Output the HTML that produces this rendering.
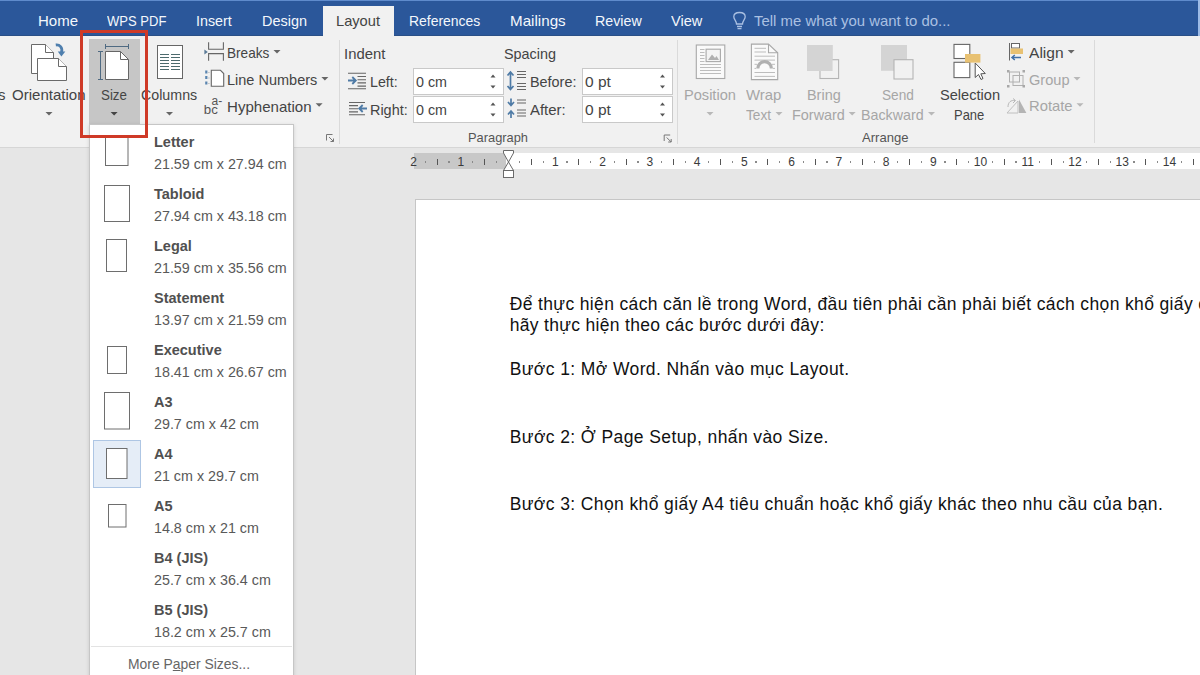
<!DOCTYPE html>
<html><head><meta charset="utf-8">
<style>
html,body{margin:0;padding:0;}
body{width:1200px;height:675px;overflow:hidden;position:relative;background:#e6e6e6;font-family:"Liberation Sans",sans-serif;}
.a{position:absolute;box-sizing:border-box;}
.t{position:absolute;white-space:pre;transform-origin:0 0;font-family:"Liberation Sans",sans-serif;}
svg{position:absolute;overflow:visible;}
</style></head><body>
<!-- tab bar -->
<div class="a" style="left:0;top:0;width:1200px;height:36px;background:#2b579a;"></div>
<div class="a" style="left:0;top:0;width:1200px;height:1px;background:#5f8bcc;"></div>
<div class="a" style="left:323px;top:6px;width:71px;height:31px;background:#f1f1f1;"></div>
<div class="a" style="left:1198px;top:0;width:2px;height:36px;background:#9dbbe6;"></div>
<div class="a" style="left:0;top:35px;width:323px;height:1px;background:#2a4f86;"></div>
<div class="a" style="left:394px;top:35px;width:804px;height:1px;background:#2a4f86;"></div>
<!-- ribbon -->
<div class="a" style="left:0;top:36px;width:1200px;height:111px;background:#f1f1f1;"></div>
<div class="a" style="left:0;top:147px;width:1200px;height:1px;background:#d6d6d6;"></div>
<div class="a" style="left:339px;top:40px;width:1px;height:104px;background:#dadada;"></div>
<div class="a" style="left:677px;top:40px;width:1px;height:104px;background:#dadada;"></div>
<div class="a" style="left:1094px;top:40px;width:1px;height:103px;background:#dadada;"></div>
<!-- size pressed -->
<div class="a" style="left:89px;top:39px;width:51px;height:86px;background:#c6c6c6;"></div>

<!-- lightbulb -->
<svg style="left:0;top:0" width="1200" height="675" viewBox="0 0 1200 675">
 <g fill="none" stroke="#aac0e2" stroke-width="1.3">
  <path d="M736.5 24 C736.5 21 733.8 19.5 733.8 16.8 C733.8 13.9 736.6 12.5 739.5 12.5 C742.4 12.5 745.2 13.9 745.2 16.8 C745.2 19.5 742.5 21 742.5 24 Z"/>
  <path d="M737 26.5 H742 M737.5 28.7 H741.5"/>
 </g>
</svg>

<!-- ribbon icons -->
<svg style="left:0;top:0" width="1200" height="675" viewBox="0 0 1200 675">
 <!-- orientation -->
 <g stroke="#6a6a6a" stroke-width="1" fill="#fff">
  <path d="M31.5 44.5 H45.5 L53.5 52.5 V73.5 H31.5 Z"/>
  <path d="M45.5 44.5 V52.5 H53.5"/>
  <path d="M37.5 58.5 H58.5 L66.5 66.5 V80.5 H37.5 Z"/>
  <path d="M58.5 58.5 V66.5 H66.5"/>
 </g>
 <path d="M55.8 45 C59.5 44.5 63 47.5 61.5 52.5" fill="none" stroke="#4f7fae" stroke-width="2.8"/>
 <path d="M57.8 51.5 L65.3 51.5 L61.4 56.5 Z" fill="#4f7fae"/>
 <!-- size -->
 <g stroke="#666" stroke-width="1" fill="#fff">
  <path d="M105.5 51.5 H120.5 L128.5 59.5 V79.5 H105.5 Z"/>
  <path d="M120.5 51.5 V59.5 H128.5" fill="none"/>
 </g>
 <g stroke="#4f6a82" stroke-width="1" fill="none">
  <path d="M105.5 46.5 H128.5 M105.5 44 V49 M128.5 44 V49"/>
  <path d="M100.5 51.5 V79.5 M98 51.5 H103 M98 79.5 H103"/>
 </g>
 <!-- columns -->
 <rect x="157.5" y="45.5" width="25" height="33" fill="#fff" stroke="#666" stroke-width="1"/>
 <g stroke="#4d6b6e" stroke-width="1">
  <path d="M160 54.5 H169 M171 54.5 H180 M160 57.5 H169 M171 57.5 H180 M160 60.5 H169 M171 60.5 H180 M160 63.5 H169 M171 63.5 H180 M160 66.5 H169 M171 66.5 H180 M160 69.5 H169 M171 69.5 H180"/>
 </g>
 <!-- breaks -->
 <g stroke="#666" stroke-width="1.1" fill="none">
  <path d="M208.6 42.3 V49.2 H223.4 V42.3 M208.6 60.8 V53.6 H223.4 V60.8"/>
 </g>
 <path d="M204.4 49.5 L207.8 52 L204.4 54.5 Z" fill="#5a7a96"/>
 <!-- line numbers -->
 <path d="M211.3 70.3 H220.5 L223.7 73.5 V86.2 H211.3 Z" fill="#fff" stroke="#666" stroke-width="1.1"/>
 <g fill="#5a85b0"><rect x="205.2" y="70.5" width="2.2" height="3"/><rect x="205.2" y="76" width="2.2" height="3"/><rect x="205.2" y="81.5" width="2.2" height="3"/></g>
 <g fill="#aaa"><rect x="208.4" y="72" width="1" height="1"/><rect x="208.4" y="77.5" width="1" height="1"/><rect x="208.4" y="83" width="1" height="1"/></g>
 <!-- hyphenation -->
 <text x="211.5" y="104.8" font-family="Liberation Sans" font-size="12" fill="#555">a-</text>
 <text x="203.8" y="114.2" font-family="Liberation Sans" font-size="13.5" fill="#555" textLength="14" lengthAdjust="spacingAndGlyphs">bc</text>
 <!-- dropdown arrows -->
 <g fill="#666">
  <path d="M45.5 112 h7 l-3.5 3.5 z"/>
  <path d="M110.6 112 h7 l-3.5 3.5 z" fill="#444"/>
  <path d="M166 112 h7 l-3.5 3.5 z"/>
  <path d="M273.5 50 h7 l-3.5 3.5 z"/>
  <path d="M321.4 77 h7 l-3.5 3.5 z"/>
  <path d="M315.6 103.3 h7 l-3.5 3.5 z"/>
  <path d="M1067.7 50 h7 l-3.5 3.5 z"/>
 </g>
 <g fill="#b8b8b8">
  <path d="M706.5 112 h7 l-3.5 3.5 z"/>
  <path d="M775.5 112 h7 l-3.5 3.5 z"/>
  <path d="M848.7 112 h7 l-3.5 3.5 z"/>
  <path d="M928 112 h7 l-3.5 3.5 z"/>
  <path d="M1073.5 77 h7 l-3.5 3.5 z"/>
  <path d="M1076.5 103.3 h7 l-3.5 3.5 z"/>
 </g>
 <!-- dialog launchers -->
 <g stroke="#777" stroke-width="1" fill="none">
  <path d="M326.5 140.5 V134.5 H332.5 M329 137 L333.5 141.5 M333.5 138.5 V141.5 H330.5"/>
  <path d="M664.2 141 V135 H670.2 M666.7 137.5 L671.2 142 M671.2 139 V142 H668.2"/>
 </g>
 <!-- indent icons -->
 <g stroke="#666" stroke-width="1.1">
  <path d="M348 73.3 H366 M357.5 76.5 H366 M357.5 79.7 H366 M357.5 82.9 H366 M357.5 86.1 H366 M348 88.7 H366"/>
  <path d="M349 102.5 H365 M349 105.6 H358 M349 108.8 H358 M349 111.9 H358 M349 114.8 H365"/>
 </g>
 <g fill="none" stroke="#4f7ba6" stroke-width="1.8">
  <path d="M348 80.5 H355.5 M352.3 77 L355.8 80.5 L352.3 84"/>
  <path d="M367 108.5 H359.5 M362.7 105 L359.2 108.5 L362.7 112"/>
 </g>
 <!-- spacing icons -->
 <g stroke="#666" stroke-width="1.1">
  <path d="M517 71.5 H526 M517 74.5 H526 M517 77.5 H526 M517 83.5 H526 M517 86.5 H526 M517 89.5 H526"/>
  <path d="M517 100 H526 M517 103 H526 M517 113 H526 M517 116 H526 M517 110 H526"/>
 </g>
 <g fill="none" stroke="#4f7ba6" stroke-width="1.7">
  <path d="M510.5 72.5 V89 M507.5 75.5 L510.5 72 L513.5 75.5 M507.5 86 L510.5 89.5 L513.5 86"/>
  <path d="M511 98.5 V105 M508 102 L511 105.5 L514 102 M511 118 V111.5 M508 114.5 L511 111 L514 114.5"/>
 </g>
 <!-- position icon -->
 <g stroke="#a8a8a8" stroke-width="1.1" fill="#fafafa">
  <rect x="696.3" y="45" width="28.5" height="33.5"/>
  <rect x="706.1" y="49.2" width="14.3" height="12.4" fill="#f4f4f4"/>
 </g>
 <path d="M708 60 L712 54.5 L715 58 L716.5 56 L719 60 Z" fill="#b0b0b0"/>
 <g stroke="#bdbdbd" stroke-width="1">
  <path d="M700 49.5 H704.5 M700 52.5 H704.5 M700 55.5 H704.5 M700 58.5 H704.5 M700 61.5 H704.5 M700 64.5 H721 M700 67.5 H721 M700 70.5 H721 M700 73.5 H721"/>
 </g>
 <!-- wrap text icon -->
 <path d="M751.4 44.1 H768.5 L777.7 52.8 V79.6 H751.4 Z" fill="#fafafa" stroke="#a8a8a8" stroke-width="1.1"/>
 <path d="M768.5 44.1 V52.8 H777.7" fill="none" stroke="#a8a8a8" stroke-width="1.1"/>
 <g stroke="#bdbdbd" stroke-width="1">
  <path d="M754.5 48.3 H766 M754.5 52 H766 M754.5 56.2 H775 M754.5 60.1 H775 M754.5 64.3 H757 M772 64.3 H775 M754.5 68.4 H756 M773 68.4 H775 M754.5 72.5 H775 M754.5 76.4 H775"/>
 </g>
 <path d="M757.8 68.5 A6.8 6.8 0 0 1 771.4 68.5" fill="none" stroke="#b0b0b0" stroke-width="3.2"/>
 <!-- bring forward -->
 <rect x="807" y="45" width="25.6" height="26" fill="#d4d4d4"/>
 <rect x="820" y="59.7" width="18.6" height="18.8" fill="#f1f1f1" stroke="#b4b4b4" stroke-width="1.1"/>
 <rect x="807" y="45" width="25.6" height="26" fill="#d4d4d4"/>
 <!-- send backward -->
 <rect x="881" y="45" width="26" height="25.8" fill="#d4d4d4"/>
 <rect x="894" y="59.7" width="19" height="19.3" fill="#f1f1f1" stroke="#b4b4b4" stroke-width="1.1"/>
 <!-- selection pane -->
 <g stroke="#666" stroke-width="1.1" fill="#fff">
  <rect x="954" y="44.4" width="15.8" height="14.1"/>
  <rect x="954" y="62.3" width="15.8" height="15.3"/>
 </g>
 <rect x="965" y="54" width="15.4" height="8.6" fill="#e8c172"/>
 <path d="M975.2 63 V77.5 L978.5 74.5 L981 79.5 L983 78.5 L980.8 73.8 L985.3 73.5 Z" fill="#fff" stroke="#555" stroke-width="1"/>
 <!-- align -->
 <path d="M1009.5 43 V60.5" stroke="#666" stroke-width="1"/>
 <rect x="1011.5" y="43.5" width="8" height="4.5" fill="#fff" stroke="#666" stroke-width="1"/>
 <rect x="1010.5" y="48.5" width="12.5" height="5.5" fill="#e8c172"/>
 <path d="M1021 57.5 H1012 M1014.8 55 L1012 57.5 L1014.8 60" fill="none" stroke="#3f6fa8" stroke-width="1.5"/>
 <!-- group -->
 <g stroke="#b0b0b0" stroke-width="1" fill="none">
  <rect x="1009.5" y="72" width="10" height="10"/>
  <rect x="1013" y="75.5" width="10" height="10"/>
 </g>
 <g fill="#a8a8a8">
  <rect x="1007" y="70" width="2.5" height="2.5"/><rect x="1022.5" y="70" width="2.5" height="2.5"/>
  <rect x="1007" y="85" width="2.5" height="2.5"/><rect x="1022.5" y="85" width="2.5" height="2.5"/>
 </g>
 <!-- rotate -->
 <path d="M1007 113 L1018 101 V113 Z" fill="none" stroke="#c0c0c0" stroke-width="1"/>
 <path d="M1019 99.5 L1026.4 113 H1019 Z" fill="#b4b4b4"/>
 <path d="M1008 107 C1008 102 1011 100 1015 100.5 M1013 98.5 L1015.5 100.5 L1013 103" fill="none" stroke="#b8b8b8" stroke-width="1"/>
</svg>

<!-- spinner boxes -->
<div class="a" style="left:413px;top:68px;width:91px;height:27px;background:#fff;border:1px solid #c9c9c9;"></div>
<div class="a" style="left:413px;top:96px;width:91px;height:27px;background:#fff;border:1px solid #c9c9c9;"></div>
<div class="a" style="left:582px;top:68px;width:91px;height:27px;background:#fff;border:1px solid #c9c9c9;"></div>
<div class="a" style="left:582px;top:96px;width:91px;height:27px;background:#fff;border:1px solid #c9c9c9;"></div>
<svg style="left:0;top:0" width="1200" height="675" viewBox="0 0 1200 675">
 <g fill="#555">
  <path d="M490.5 77.5 h5 l-2.5 -3 z M490.5 85.5 h5 l-2.5 3 z"/>
  <path d="M490.5 105.5 h5 l-2.5 -3 z M490.5 113.5 h5 l-2.5 3 z"/>
  <path d="M660 77.5 h5 l-2.5 -3 z M660 85.5 h5 l-2.5 3 z"/>
  <path d="M660 105.5 h5 l-2.5 -3 z M660 113.5 h5 l-2.5 3 z"/>
 </g>
</svg>

<!-- ruler -->
<div class="a" style="left:414px;top:153px;width:92px;height:16px;background:#c8c8c8;"></div>
<div class="a" style="left:506px;top:153px;width:694px;height:16px;background:#ffffff;"></div>
<div class="t" style="left:393.50px;width:40px;text-align:center;top:155.84px;font-size:12px;line-height:12px;color:#3a3a3a;">2</div>
<div class="a" style="left:424.71px;top:161.4px;width:1.2px;height:1.2px;background:#8a8a8a;"></div>
<div class="a" style="left:436.62px;top:159px;width:1.1px;height:6px;background:#555;"></div>
<div class="a" style="left:448.34px;top:161.4px;width:1.2px;height:1.2px;background:#8a8a8a;"></div>
<div class="t" style="left:440.75px;width:40px;text-align:center;top:155.84px;font-size:12px;line-height:12px;color:#3a3a3a;">1</div>
<div class="a" style="left:471.96px;top:161.4px;width:1.2px;height:1.2px;background:#8a8a8a;"></div>
<div class="a" style="left:483.88px;top:159px;width:1.1px;height:6px;background:#555;"></div>
<div class="a" style="left:495.59px;top:161.4px;width:1.2px;height:1.2px;background:#8a8a8a;"></div>
<div class="a" style="left:519.21px;top:161.4px;width:1.2px;height:1.2px;background:#8a8a8a;"></div>
<div class="a" style="left:531.12px;top:159px;width:1.1px;height:6px;background:#555;"></div>
<div class="a" style="left:542.84px;top:161.4px;width:1.2px;height:1.2px;background:#8a8a8a;"></div>
<div class="t" style="left:535.25px;width:40px;text-align:center;top:155.84px;font-size:12px;line-height:12px;color:#3a3a3a;">1</div>
<div class="a" style="left:566.46px;top:161.4px;width:1.2px;height:1.2px;background:#8a8a8a;"></div>
<div class="a" style="left:578.38px;top:159px;width:1.1px;height:6px;background:#555;"></div>
<div class="a" style="left:590.09px;top:161.4px;width:1.2px;height:1.2px;background:#8a8a8a;"></div>
<div class="t" style="left:582.50px;width:40px;text-align:center;top:155.84px;font-size:12px;line-height:12px;color:#3a3a3a;">2</div>
<div class="a" style="left:613.71px;top:161.4px;width:1.2px;height:1.2px;background:#8a8a8a;"></div>
<div class="a" style="left:625.62px;top:159px;width:1.1px;height:6px;background:#555;"></div>
<div class="a" style="left:637.34px;top:161.4px;width:1.2px;height:1.2px;background:#8a8a8a;"></div>
<div class="t" style="left:629.75px;width:40px;text-align:center;top:155.84px;font-size:12px;line-height:12px;color:#3a3a3a;">3</div>
<div class="a" style="left:660.96px;top:161.4px;width:1.2px;height:1.2px;background:#8a8a8a;"></div>
<div class="a" style="left:672.88px;top:159px;width:1.1px;height:6px;background:#555;"></div>
<div class="a" style="left:684.59px;top:161.4px;width:1.2px;height:1.2px;background:#8a8a8a;"></div>
<div class="t" style="left:677.00px;width:40px;text-align:center;top:155.84px;font-size:12px;line-height:12px;color:#3a3a3a;">4</div>
<div class="a" style="left:708.21px;top:161.4px;width:1.2px;height:1.2px;background:#8a8a8a;"></div>
<div class="a" style="left:720.12px;top:159px;width:1.1px;height:6px;background:#555;"></div>
<div class="a" style="left:731.84px;top:161.4px;width:1.2px;height:1.2px;background:#8a8a8a;"></div>
<div class="t" style="left:724.25px;width:40px;text-align:center;top:155.84px;font-size:12px;line-height:12px;color:#3a3a3a;">5</div>
<div class="a" style="left:755.46px;top:161.4px;width:1.2px;height:1.2px;background:#8a8a8a;"></div>
<div class="a" style="left:767.38px;top:159px;width:1.1px;height:6px;background:#555;"></div>
<div class="a" style="left:779.09px;top:161.4px;width:1.2px;height:1.2px;background:#8a8a8a;"></div>
<div class="t" style="left:771.50px;width:40px;text-align:center;top:155.84px;font-size:12px;line-height:12px;color:#3a3a3a;">6</div>
<div class="a" style="left:802.71px;top:161.4px;width:1.2px;height:1.2px;background:#8a8a8a;"></div>
<div class="a" style="left:814.62px;top:159px;width:1.1px;height:6px;background:#555;"></div>
<div class="a" style="left:826.34px;top:161.4px;width:1.2px;height:1.2px;background:#8a8a8a;"></div>
<div class="t" style="left:818.75px;width:40px;text-align:center;top:155.84px;font-size:12px;line-height:12px;color:#3a3a3a;">7</div>
<div class="a" style="left:849.96px;top:161.4px;width:1.2px;height:1.2px;background:#8a8a8a;"></div>
<div class="a" style="left:861.88px;top:159px;width:1.1px;height:6px;background:#555;"></div>
<div class="a" style="left:873.59px;top:161.4px;width:1.2px;height:1.2px;background:#8a8a8a;"></div>
<div class="t" style="left:866.00px;width:40px;text-align:center;top:155.84px;font-size:12px;line-height:12px;color:#3a3a3a;">8</div>
<div class="a" style="left:897.21px;top:161.4px;width:1.2px;height:1.2px;background:#8a8a8a;"></div>
<div class="a" style="left:909.12px;top:159px;width:1.1px;height:6px;background:#555;"></div>
<div class="a" style="left:920.84px;top:161.4px;width:1.2px;height:1.2px;background:#8a8a8a;"></div>
<div class="t" style="left:913.25px;width:40px;text-align:center;top:155.84px;font-size:12px;line-height:12px;color:#3a3a3a;">9</div>
<div class="a" style="left:944.46px;top:161.4px;width:1.2px;height:1.2px;background:#8a8a8a;"></div>
<div class="a" style="left:956.38px;top:159px;width:1.1px;height:6px;background:#555;"></div>
<div class="a" style="left:968.09px;top:161.4px;width:1.2px;height:1.2px;background:#8a8a8a;"></div>
<div class="t" style="left:960.50px;width:40px;text-align:center;top:155.84px;font-size:12px;line-height:12px;color:#3a3a3a;">10</div>
<div class="a" style="left:991.71px;top:161.4px;width:1.2px;height:1.2px;background:#8a8a8a;"></div>
<div class="a" style="left:1003.62px;top:159px;width:1.1px;height:6px;background:#555;"></div>
<div class="a" style="left:1015.34px;top:161.4px;width:1.2px;height:1.2px;background:#8a8a8a;"></div>
<div class="t" style="left:1007.75px;width:40px;text-align:center;top:155.84px;font-size:12px;line-height:12px;color:#3a3a3a;">11</div>
<div class="a" style="left:1038.96px;top:161.4px;width:1.2px;height:1.2px;background:#8a8a8a;"></div>
<div class="a" style="left:1050.88px;top:159px;width:1.1px;height:6px;background:#555;"></div>
<div class="a" style="left:1062.59px;top:161.4px;width:1.2px;height:1.2px;background:#8a8a8a;"></div>
<div class="t" style="left:1055.00px;width:40px;text-align:center;top:155.84px;font-size:12px;line-height:12px;color:#3a3a3a;">12</div>
<div class="a" style="left:1086.21px;top:161.4px;width:1.2px;height:1.2px;background:#8a8a8a;"></div>
<div class="a" style="left:1098.12px;top:159px;width:1.1px;height:6px;background:#555;"></div>
<div class="a" style="left:1109.84px;top:161.4px;width:1.2px;height:1.2px;background:#8a8a8a;"></div>
<div class="t" style="left:1102.25px;width:40px;text-align:center;top:155.84px;font-size:12px;line-height:12px;color:#3a3a3a;">13</div>
<div class="a" style="left:1133.46px;top:161.4px;width:1.2px;height:1.2px;background:#8a8a8a;"></div>
<div class="a" style="left:1145.38px;top:159px;width:1.1px;height:6px;background:#555;"></div>
<div class="a" style="left:1157.09px;top:161.4px;width:1.2px;height:1.2px;background:#8a8a8a;"></div>
<div class="t" style="left:1149.50px;width:40px;text-align:center;top:155.84px;font-size:12px;line-height:12px;color:#3a3a3a;">14</div>
<div class="a" style="left:1180.71px;top:161.4px;width:1.2px;height:1.2px;background:#8a8a8a;"></div>
<div class="a" style="left:1192.62px;top:159px;width:1.1px;height:6px;background:#555;"></div>
<svg style="left:0;top:0" width="1200" height="675" viewBox="0 0 1200 675">
 <path d="M503.5 150.5 H513.5 V153 L508.5 162 L503.5 153 Z" fill="#fff" stroke="#6a6a6a" stroke-width="1"/>
 <path d="M508.5 162 L513.5 170.5 H503.5 Z" fill="#fff" stroke="#6a6a6a" stroke-width="1"/>
 <rect x="503.5" y="170.5" width="10" height="7" fill="#fff" stroke="#6a6a6a" stroke-width="1"/>
</svg>

<!-- page -->
<div class="a" style="left:415px;top:199px;width:800px;height:500px;background:#fff;border-left:1px solid #c6c6c6;border-top:1px solid #c6c6c6;"></div>

<!-- dropdown -->
<div class="a" style="left:89px;top:124px;width:205px;height:560px;background:#fff;border:1px solid #c6c6c6;box-shadow:0 1px 4px rgba(0,0,0,0.13);"></div>
<div class="a" style="left:93px;top:440px;width:48px;height:48px;background:#e5edf7;border:1px solid #aec6e4;"></div>
<div class="a" style="left:91px;top:646px;width:201px;height:1px;background:#e3e3e3;"></div>
<svg style="left:0;top:0" width="1200" height="675" viewBox="0 0 1200 675">
 <g fill="#fff" stroke="#6e6e6e" stroke-width="1">
  <rect x="105.5" y="136.5" width="22.5" height="29"/>
  <rect x="104.5" y="185.5" width="25" height="36"/>
  <rect x="106.5" y="239.5" width="20" height="32"/>
  <rect x="107.5" y="346.5" width="19" height="27"/>
  <rect x="104.5" y="392.5" width="25" height="36.5"/>
  <rect x="106.5" y="448.5" width="20.5" height="30" fill="#fff"/>
  <rect x="108.5" y="504.5" width="17.5" height="22.5"/>
 </g>
</svg>
<div class="t" style="left:37.70px;top:13.30px;font-size:15px;line-height:15px;color:#f4f7fc;font-weight:normal;transform:scaleX(0.9996);">Home</div>
<div class="t" style="left:107.30px;top:13.30px;font-size:15px;line-height:15px;color:#f4f7fc;font-weight:normal;transform:scaleX(0.8691);">WPS PDF</div>
<div class="t" style="left:196.00px;top:13.30px;font-size:15px;line-height:15px;color:#f4f7fc;font-weight:normal;transform:scaleX(0.9516);">Insert</div>
<div class="t" style="left:261.70px;top:13.30px;font-size:15px;line-height:15px;color:#f4f7fc;font-weight:normal;transform:scaleX(0.9635);">Design</div>
<div class="t" style="left:336.30px;top:13.30px;font-size:15px;line-height:15px;color:#444;font-weight:normal;transform:scaleX(0.9768);">Layout</div>
<div class="t" style="left:409.30px;top:13.30px;font-size:15px;line-height:15px;color:#f4f7fc;font-weight:normal;transform:scaleX(0.9294);">References</div>
<div class="t" style="left:510.00px;top:13.30px;font-size:15px;line-height:15px;color:#f4f7fc;font-weight:normal;transform:scaleX(1.0122);">Mailings</div>
<div class="t" style="left:595.00px;top:13.30px;font-size:15px;line-height:15px;color:#f4f7fc;font-weight:normal;transform:scaleX(0.9494);">Review</div>
<div class="t" style="left:671.30px;top:13.30px;font-size:15px;line-height:15px;color:#f4f7fc;font-weight:normal;transform:scaleX(0.9674);">View</div>
<div class="t" style="left:754.20px;top:13.30px;font-size:15px;line-height:15px;color:#aac0e2;font-weight:normal;transform:scaleX(0.9944);">Tell me what you want to do...</div>
<div class="t" style="left:-2.00px;top:87.00px;font-size:15px;line-height:15px;color:#444444;font-weight:normal;">s</div>
<div class="t" style="left:11.60px;top:87.00px;font-size:15px;line-height:15px;color:#444444;font-weight:normal;transform:scaleX(1.0031);">Orientation</div>
<div class="t" style="left:100.50px;top:87.00px;font-size:15px;line-height:15px;color:#444444;font-weight:normal;transform:scaleX(0.8874);">Size</div>
<div class="t" style="left:141.40px;top:87.00px;font-size:15px;line-height:15px;color:#444444;font-weight:normal;transform:scaleX(0.9495);">Columns</div>
<div class="t" style="left:227.40px;top:45.00px;font-size:15px;line-height:15px;color:#444444;font-weight:normal;transform:scaleX(0.9060);">Breaks</div>
<div class="t" style="left:227.40px;top:72.10px;font-size:15px;line-height:15px;color:#444444;font-weight:normal;transform:scaleX(0.9669);">Line Numbers</div>
<div class="t" style="left:227.20px;top:98.90px;font-size:15px;line-height:15px;color:#444444;font-weight:normal;transform:scaleX(1.0043);">Hyphenation</div>
<div class="t" style="left:344.30px;top:46.53px;font-size:14.5px;line-height:14.5px;color:#444444;font-weight:normal;transform:scaleX(1.0241);">Indent</div>
<div class="t" style="left:370.30px;top:74.93px;font-size:14.5px;line-height:14.5px;color:#444444;font-weight:normal;transform:scaleX(0.9816);">Left:</div>
<div class="t" style="left:370.30px;top:103.23px;font-size:14.5px;line-height:14.5px;color:#444444;font-weight:normal;transform:scaleX(0.9950);">Right:</div>
<div class="t" style="left:416.30px;top:74.93px;font-size:14.5px;line-height:14.5px;color:#444444;font-weight:normal;transform:scaleX(0.9866);">0 cm</div>
<div class="t" style="left:416.30px;top:103.23px;font-size:14.5px;line-height:14.5px;color:#444444;font-weight:normal;transform:scaleX(0.9866);">0 cm</div>
<div class="t" style="left:504.30px;top:46.63px;font-size:14.5px;line-height:14.5px;color:#444444;font-weight:normal;transform:scaleX(0.9922);">Spacing</div>
<div class="t" style="left:530.30px;top:74.93px;font-size:14.5px;line-height:14.5px;color:#444444;font-weight:normal;transform:scaleX(0.9925);">Before:</div>
<div class="t" style="left:530.30px;top:103.23px;font-size:14.5px;line-height:14.5px;color:#444444;font-weight:normal;transform:scaleX(1.0301);">After:</div>
<div class="t" style="left:585.20px;top:74.93px;font-size:14.5px;line-height:14.5px;color:#444444;font-weight:normal;transform:scaleX(1.0708);">0 pt</div>
<div class="t" style="left:585.20px;top:103.23px;font-size:14.5px;line-height:14.5px;color:#444444;font-weight:normal;transform:scaleX(1.0708);">0 pt</div>
<div class="t" style="left:468.30px;top:130.97px;font-size:13.5px;line-height:13.5px;color:#555;font-weight:normal;transform:scaleX(0.9517);">Paragraph</div>
<div class="t" style="left:684.40px;top:87.10px;font-size:15px;line-height:15px;color:#a6a6a6;font-weight:normal;transform:scaleX(0.9724);">Position</div>
<div class="t" style="left:746.20px;top:87.10px;font-size:15px;line-height:15px;color:#a6a6a6;font-weight:normal;transform:scaleX(0.9922);">Wrap</div>
<div class="t" style="left:746.20px;top:106.70px;font-size:15px;line-height:15px;color:#a6a6a6;font-weight:normal;transform:scaleX(0.9122);">Text</div>
<div class="t" style="left:806.60px;top:87.10px;font-size:15px;line-height:15px;color:#a6a6a6;font-weight:normal;transform:scaleX(0.9620);">Bring</div>
<div class="t" style="left:791.70px;top:106.70px;font-size:15px;line-height:15px;color:#a6a6a6;font-weight:normal;transform:scaleX(0.9615);">Forward</div>
<div class="t" style="left:881.50px;top:87.10px;font-size:15px;line-height:15px;color:#a6a6a6;font-weight:normal;transform:scaleX(0.9102);">Send</div>
<div class="t" style="left:860.60px;top:106.70px;font-size:15px;line-height:15px;color:#a6a6a6;font-weight:normal;transform:scaleX(0.9520);">Backward</div>
<div class="t" style="left:862.30px;top:130.77px;font-size:13.5px;line-height:13.5px;color:#555;font-weight:normal;transform:scaleX(0.9681);">Arrange</div>
<div class="t" style="left:939.50px;top:87.10px;font-size:15px;line-height:15px;color:#444444;font-weight:normal;transform:scaleX(0.9738);">Selection</div>
<div class="t" style="left:954.30px;top:106.70px;font-size:15px;line-height:15px;color:#444444;font-weight:normal;transform:scaleX(0.8646);">Pane</div>
<div class="t" style="left:1029.30px;top:45.00px;font-size:15px;line-height:15px;color:#444444;font-weight:normal;transform:scaleX(1.0372);">Align</div>
<div class="t" style="left:1029.30px;top:71.70px;font-size:15px;line-height:15px;color:#a6a6a6;font-weight:normal;transform:scaleX(0.9712);">Group</div>
<div class="t" style="left:1029.30px;top:98.10px;font-size:15px;line-height:15px;color:#a6a6a6;font-weight:normal;transform:scaleX(0.9864);">Rotate</div>
<div class="t" style="left:154.00px;top:134.73px;font-size:14.5px;line-height:14.5px;color:#505050;font-weight:bold;">Letter</div>
<div class="t" style="left:154.00px;top:156.90px;font-size:14.3px;line-height:14.3px;color:#595959;font-weight:normal;">21.59 cm x 27.94 cm</div>
<div class="t" style="left:154.00px;top:186.73px;font-size:14.5px;line-height:14.5px;color:#505050;font-weight:bold;">Tabloid</div>
<div class="t" style="left:154.00px;top:208.90px;font-size:14.3px;line-height:14.3px;color:#595959;font-weight:normal;">27.94 cm x 43.18 cm</div>
<div class="t" style="left:154.00px;top:238.73px;font-size:14.5px;line-height:14.5px;color:#505050;font-weight:bold;">Legal</div>
<div class="t" style="left:154.00px;top:260.90px;font-size:14.3px;line-height:14.3px;color:#595959;font-weight:normal;">21.59 cm x 35.56 cm</div>
<div class="t" style="left:154.00px;top:290.73px;font-size:14.5px;line-height:14.5px;color:#505050;font-weight:bold;">Statement</div>
<div class="t" style="left:154.00px;top:312.90px;font-size:14.3px;line-height:14.3px;color:#595959;font-weight:normal;">13.97 cm x 21.59 cm</div>
<div class="t" style="left:154.00px;top:342.73px;font-size:14.5px;line-height:14.5px;color:#505050;font-weight:bold;">Executive</div>
<div class="t" style="left:154.00px;top:364.90px;font-size:14.3px;line-height:14.3px;color:#595959;font-weight:normal;">18.41 cm x 26.67 cm</div>
<div class="t" style="left:154.00px;top:394.73px;font-size:14.5px;line-height:14.5px;color:#505050;font-weight:bold;">A3</div>
<div class="t" style="left:154.00px;top:416.90px;font-size:14.3px;line-height:14.3px;color:#595959;font-weight:normal;">29.7 cm x 42 cm</div>
<div class="t" style="left:154.00px;top:446.73px;font-size:14.5px;line-height:14.5px;color:#505050;font-weight:bold;">A4</div>
<div class="t" style="left:154.00px;top:468.90px;font-size:14.3px;line-height:14.3px;color:#595959;font-weight:normal;">21 cm x 29.7 cm</div>
<div class="t" style="left:154.00px;top:498.73px;font-size:14.5px;line-height:14.5px;color:#505050;font-weight:bold;">A5</div>
<div class="t" style="left:154.00px;top:520.90px;font-size:14.3px;line-height:14.3px;color:#595959;font-weight:normal;">14.8 cm x 21 cm</div>
<div class="t" style="left:154.00px;top:550.73px;font-size:14.5px;line-height:14.5px;color:#505050;font-weight:bold;">B4 (JIS)</div>
<div class="t" style="left:154.00px;top:572.90px;font-size:14.3px;line-height:14.3px;color:#595959;font-weight:normal;">25.7 cm x 36.4 cm</div>
<div class="t" style="left:154.00px;top:602.73px;font-size:14.5px;line-height:14.5px;color:#505050;font-weight:bold;">B5 (JIS)</div>
<div class="t" style="left:154.00px;top:624.90px;font-size:14.3px;line-height:14.3px;color:#595959;font-weight:normal;">18.2 cm x 25.7 cm</div>
<div class="t" style="left:127.60px;top:656.53px;font-size:14.5px;line-height:14.5px;color:#666;font-weight:normal;transform:scaleX(0.9579);">More P<u>a</u>per Sizes...</div>
<div class="t" style="left:509.70px;top:295.89px;font-size:17.5px;line-height:17.5px;color:#111;font-weight:normal;letter-spacing:0.360px;">Để thực hiện cách căn lề trong Word, đầu tiên phải cần phải biết cách chọn khổ giấy cho</div>
<div class="t" style="left:509.70px;top:316.99px;font-size:17.5px;line-height:17.5px;color:#111;font-weight:normal;letter-spacing:0.315px;">hãy thực hiện theo các bước dưới đây:</div>
<div class="t" style="left:509.70px;top:361.19px;font-size:17.5px;line-height:17.5px;color:#111;font-weight:normal;letter-spacing:0.398px;">Bước 1: Mở Word. Nhấn vào mục Layout.</div>
<div class="t" style="left:509.70px;top:428.69px;font-size:17.5px;line-height:17.5px;color:#111;font-weight:normal;letter-spacing:0.401px;">Bước 2: Ở Page Setup, nhấn vào Size.</div>
<div class="t" style="left:509.70px;top:495.69px;font-size:17.5px;line-height:17.5px;color:#111;font-weight:normal;letter-spacing:0.395px;">Bước 3: Chọn khổ giấy A4 tiêu chuẩn hoặc khổ giấy khác theo nhu cầu của bạn.</div>
<!-- red box -->
<div class="a" style="left:80.2px;top:29.8px;width:67.4px;height:108px;border:3.3px solid #cf3a27;"></div>
</body></html>
